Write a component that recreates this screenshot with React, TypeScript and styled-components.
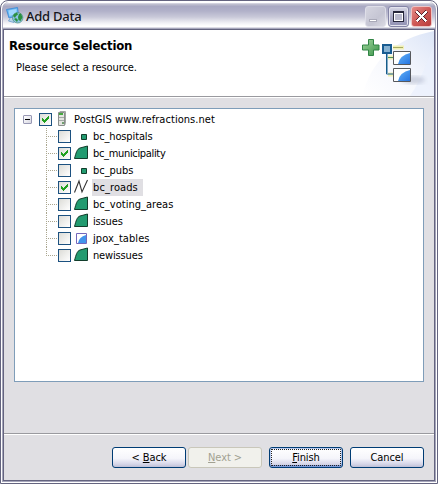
import React from "react";
import styled, { createGlobalStyle, css } from "styled-components";

const Global = createGlobalStyle`
  *, *::before, *::after { box-sizing: border-box; }
  body { margin: 0; background: #fff; }
`;

const Frame = styled.div`
  width: 438px;
  height: 484px;
  border: 1px solid #64647f;
  border-radius: 8px 8px 0 0;
  background: #fff;
  padding: 1px;
  overflow: hidden;
  font: 11px/17px "DejaVu Sans Condensed", "DejaVu Sans", sans-serif;
  font-stretch: condensed;
  color: #000;
`;

const Shell = styled.div`
  height: 480px;
  border: 1px solid #a6a6bb;
  border-top: 0;
  border-radius: 7px 7px 0 0;
  overflow: hidden;
  display: flex;
  flex-direction: column;
  background: linear-gradient(#fff 0 1px, #d3d3df 1px 2px, #bdbdce 2px 3px, #a8a8c2 4px, #b1b1c9 9px, #c9c9d9 15px, #f1f1f5 21px, #fff 24px, #fff 25px, #dddde6 25px 26px, #a6a6bb 26px);
`;

const TitleBar = styled.header`
  height: 27px;
  flex: none;
  display: flex;
  align-items: flex-start;
  padding: 4px 3px 0 3px;
`;

const Title = styled.h1`
  margin: 1px auto 0 2px;
  font: 500 13px/18px "Noto Sans", sans-serif;
  letter-spacing: -0.25px;
  color: #16161c;
`;

const Controls = styled.div`
  display: flex;
  gap: 2px;
`;

const ControlButton = styled.button<{ $kind: "min" | "max" | "close" }>`
  width: 21px;
  height: 21px;
  padding: 0;
  display: flex;
  border-radius: 3px;
  border: 1px solid #f5f5fa;
  ${({ $kind }) =>
    $kind === "close"
      ? css`background: linear-gradient(135deg, #e58c88, #cf5a57 50%, #b93c3c); border-color: #eec4c4;`
      : $kind === "max"
      ? css`background: linear-gradient(#d9d9e6, #a9a9c4 50%, #9292b4); border-color: #8484a6; box-shadow: inset 0 0 0 1px #e3e3ee;`
      : css`background: linear-gradient(135deg, #d5d5e0, #c5c5d3 60%, #d9d9e2); border-color: #dedee8;`}
`;

const Body = styled.div`
  flex: 1;
  display: flex;
  flex-direction: column;
  border: 1px solid #64647f;
  background: #e0dfe3;
`;

const Banner = styled.section`
  height: 67px;
  flex: none;
  display: flex;
  justify-content: space-between;
  background: #fff;
  border-bottom: 1px solid #9a9a9f;
`;

const BannerText = styled.div`
  padding: 7px 0 0 5px;
`;

const Heading = styled.h2`
  margin: 0;
  font: bold 13px/17px "DejaVu Sans Condensed", "DejaVu Sans", sans-serif;
  font-stretch: condensed;
  letter-spacing: -0.16px;
`;

const Message = styled.p`
  margin: 5px 0 0 7px;
  letter-spacing: -0.08px;
`;

const Content = styled.main`
  height: 337px;
  flex: none;
  padding: 10px 10px 0;
  border-top: 1px solid #fff;
  border-bottom: 1px solid #9a9a9f;
`;

const Tree = styled.div`
  width: 410px;
  height: 274px;
  padding: 2px 0 0 8px;
  background: #fff;
  border: 1px solid #7f9db9;
`;

const RootRow = styled.div`
  height: 17px;
  display: flex;
  align-items: center;
`;

const Expander = styled.span`
  width: 9px;
  height: 9px;
  margin-right: 7px;
  border: 1px solid #9898b4;
  border-radius: 1px;
  background: linear-gradient(135deg, #fff, #d8d8e2);
  display: grid;
  place-items: center;
  &::after { content: ""; width: 5px; height: 1px; background: #000; }
`;

const Check = styled.span`
  width: 13px;
  height: 13px;
  flex: none;
  border: 1px solid #1c5180;
  background: linear-gradient(135deg, #dcdcd7, #fff);
  display: grid;
  place-items: center;
`;

const Children = styled.ul`
  list-style: none;
  margin: 0;
  padding: 0 0 0 23px;
`;

const Branch = styled.li`
  height: 17px;
  display: flex;
  align-items: center;
`;

const Guide = styled.svg`
  width: 12px;
  height: 17px;
  flex: none;
`;

const IconSlot = styled.span<{ $root?: boolean }>`
  width: 16px;
  height: 16px;
  margin: ${({ $root }) => ($root ? "-1px 0 0 5px" : "0 3px 0 2px")};
  flex: none;
  align-self: flex-start;
  svg { display: block; }
`;

const Label = styled.span<{ $selected?: boolean; $track?: number }>`
  height: 17px;
  line-height: 17px;
  padding: 0 2px 0 1px;
  white-space: nowrap;
  letter-spacing: ${({ $track = -0.1 }) => $track}px;
  background: ${({ $selected }) => ($selected ? "#e0dfe3" : "transparent")};
  ${({ $selected }) => $selected && "width: 51px;"}
`;

const Footer = styled.footer`
  flex: 1;
  display: flex;
  padding: 12px 10px 0;
  justify-content: flex-end;
  border-top: 1px solid #fff;
`;

const DialogButton = styled.button<{ $focus?: boolean }>`
  width: 74px;
  height: 21px;
  padding: 0;
  margin-left: 7px;
  border: 1px solid #003c74;
  border-radius: 3px;
  background: linear-gradient(#fff, #f5f5fb 55%, #d5d5e8 85%, #bebfd5);
  font: inherit;
  line-height: 19px;
  letter-spacing: -0.1px;
  color: #000;
  &:disabled {
    margin-left: 2px;
    color: #a1a192;
    border-color: #c9c7ba;
    background: #f1f1ec;
  }
  ${({ $focus }) =>
    $focus &&
    css`
      box-shadow: inset 0 -2px 0 #7c9ad8, inset 0 0 0 1px #b7c9ed;
      outline: 1px dotted #222;
      outline-offset: -3px;
    `}
`;

const Tick = () => (
  <svg width="9" height="9" viewBox="0 0 9 9" shapeRendering="crispEdges">
    <path d="M1 3h1v1h1v1h1v-1h1v-1h1v-1h1v-1h1v3h-1v1h-1v1h-1v1h-1v1h-1v-1h-1v-1h-1z" fill="#21a121" />
  </svg>
);

const DialogIcon = () => (
  <svg width="18" height="18" viewBox="0 0 18 18">
    <path d="M.5 3.500 11.500 1.500l1 8L3 12z" fill="#6bb9f2" stroke="#3c8ad6" strokeWidth=".9" />
    <path d="M2.500 4.500 10.500 3v5l-7 2z" fill="#a0d8ff" />
    <path d="M4 12.500 2.500 15 8 16.500v-4" fill="#b7d4ec" stroke="#6d9dcb" strokeWidth=".8" />
    <circle cx="11.700" cy="11.800" r="5.200" fill="#8cc4e4" stroke="#4d8d78" strokeWidth=".7" />
    <path d="m8 8 3-1.500 1 2-2 1.500-1 2-2-2zm5 0 2-.5 1.500 4-2 3.500-2-1-.5-3zm-5 5 2-1 2 2-1 2z" fill="#2b9140" />
  </svg>
);

const ControlGlyph = ({ kind }: { kind: "min" | "max" | "close" }) => (
  <svg width="19" height="19" viewBox="0 0 19 19" shapeRendering="crispEdges">
    {kind === "min" && <path d="M3.500 12.500h7v2h-7z" fill="#fff" stroke="#a9a9b8" />}
    {kind === "max" && (
      <>
        <path d="M4 4h11v11H4z" fill="#fff" />
        <path d="M4.500 4.500h10v10h-10z" fill="#b9b9cd" stroke="#26263b" />
        <path d="M4 5.500h11" stroke="#26263b" />
        <path d="M5.500 6.500h8v7h-8z" fill="none" stroke="#fff" />
      </>
    )}
    {kind === "close" && (
      <>
        <path d="m4.500 4.500 10 10m0-10-10 10" stroke="#592530" strokeWidth="4" />
        <path d="m4.500 4.500 10 10m0-10-10 10" stroke="#fff" strokeWidth="2.300" />
      </>
    )}
  </svg>
);

const BannerArt = () => (
  <svg width="86" height="66" viewBox="0 0 86 66">
    <defs>
      <linearGradient id="sky" x1="0" y1="1" x2="1" y2="0">
        <stop offset="0" stopColor="#fff" />
        <stop offset=".5" stopColor="#f5f7fd" />
        <stop offset="1" stopColor="#dce5f7" />
      </linearGradient>
      <linearGradient id="tile" x1="0" y1="0" x2="1" y2="1">
        <stop offset="0" stopColor="#63b4fa" />
        <stop offset="1" stopColor="#2674e0" />
      </linearGradient>
      <linearGradient id="plus" x1="0" y1="0" x2="1" y2="1">
        <stop offset="0" stopColor="#a1d49c" />
        <stop offset="1" stopColor="#3a9449" />
      </linearGradient>
      <filter id="soft"><feGaussianBlur stdDeviation="2" /></filter>
    </defs>
    <path d="M14 66C24 29 47 9 86 1V66z" fill="url(#sky)" />
    <path d="M62 66C74 49 80 28 86 16V66z" fill="#eaf0fc" opacity=".7" />
    <ellipse cx="65" cy="50" rx="12" ry="4" fill="#a5adc2" opacity=".5" filter="url(#soft)" />
    <path d="M20.500 9.500h5v5.500h5.500v5h-5.500v5.500h-5v-5.500h-6v-5h6z" fill="url(#plus)" stroke="#308444" />
    <path d="M45 17.500h11M40 27.500h6M40 44.500h6" stroke="#f1f0b4" strokeWidth="4" />
    <path d="M38.500 22v22h7" fill="none" stroke="#155b8b" />
    <path d="M39 27.500h6" stroke="#4d8d61" />
    <path d="M39.500 22v21" stroke="#83aac4" />
    <path d="M45 17.500h10" stroke="#a6a963" />
    <path d="M35 15h8v8h-8z" fill="#86b1d1" stroke="#195c91" strokeWidth="2" />
    {[21.5, 38.5].map((y) => (
      <g key={y}>
        <path d={`M45.500 ${y}h17v13h-17z`} fill="#fff" stroke="#56585d" />
        <path d={`M50 ${y + 12.5}q2-9 12-11v11z`} fill="url(#tile)" />
      </g>
    ))}
  </svg>
);

const ServerIcon = () => (
  <svg width="12" height="17" viewBox="0 0 12 17">
    <path d="M1.500 2.500h6v13h-6z" fill="#e3e4e0" stroke="#8b8f8c" />
    <path d="M2 2.500 3 1.500h5.500v12l-1 2" fill="none" stroke="#a2a7a4" />
    <path d="M2 3h4v2H2z" fill="#45a83f" />
    <path d="M2 7.500h5M2 10.500h5" stroke="#a5aaa6" />
    <path d="M5 12h2v2H5z" fill="#719f70" />
  </svg>
);

type Kind = "point" | "polygon" | "line" | "table";

const LayerIcon = ({ kind }: { kind: Kind }) => (
  <svg width="16" height="16" viewBox="0 0 16 16">
    {kind === "point" && <path d="M8.500 6.500h5v5h-5z" fill="#229b70" stroke="#123d2b" />}
    {kind === "polygon" && <path d="M1.500 13.500C3 8 4 4 7 3l7.500-2v12.500z" fill="#229b70" stroke="#123d2b" />}
    {kind === "line" && <path d="M1.500 13.500 6 2l3 11L14.500 1" fill="none" stroke="#333" strokeWidth="1.100" />}
    {kind === "table" && (
      <>
        <path d="M3.500 3.500h10v10h-10z" fill="#fff" stroke="#7467bb" />
        <path d="M5 13q1-6 8-8v8z" fill="#4294ec" />
      </>
    )}
  </svg>
);

const layers: { name: string; kind: Kind; track: number; checked?: boolean; selected?: boolean }[] = [
  { name: "bc_hospitals", kind: "point", track: -0.13 },
  { name: "bc_municipality", kind: "polygon", track: -0.33, checked: true },
  { name: "bc_pubs", kind: "point", track: -0.05 },
  { name: "bc_roads", kind: "line", track: 0.1, checked: true, selected: true },
  { name: "bc_voting_areas", kind: "polygon", track: 0.03 },
  { name: "issues", kind: "polygon", track: -0.15 },
  { name: "jpox_tables", kind: "table", track: 0.07 },
  { name: "newissues", kind: "polygon", track: -0.15 },
];

export default function App() {
  return (
    <>
      <Global />
      <Frame>
        <Shell>
          <TitleBar>
            <DialogIcon />
            <Title>Add Data</Title>
            <Controls>
              {(["min", "max", "close"] as const).map((kind) => (
                <ControlButton key={kind} $kind={kind} aria-label={kind}>
                  <ControlGlyph kind={kind} />
                </ControlButton>
              ))}
            </Controls>
          </TitleBar>
          <Body>
            <Banner>
              <BannerText>
                <Heading>Resource Selection</Heading>
                <Message>Please select a resource.</Message>
              </BannerText>
              <BannerArt />
            </Banner>
            <Content>
              <Tree>
                <RootRow>
                  <Expander />
                  <Check><Tick /></Check>
                  <IconSlot $root><ServerIcon /></IconSlot>
                  <Label $track={0.05}>PostGIS www.refractions.net</Label>
                </RootRow>
                <Children>
                  {layers.map((layer, i) => (
                    <Branch key={layer.name}>
                      <Guide>
                        <path
                          d={`M.5 0V${i === layers.length - 1 ? 9 : 17}M2 8.500h10`}
                          stroke="#aaa68f"
                          strokeDasharray="1 1"
                          shapeRendering="crispEdges"
                        />
                      </Guide>
                      <Check>{layer.checked && <Tick />}</Check>
                      <IconSlot><LayerIcon kind={layer.kind} /></IconSlot>
                      <Label $selected={layer.selected} $track={layer.track}>{layer.name}</Label>
                    </Branch>
                  ))}
                </Children>
              </Tree>
            </Content>
            <Footer>
              <DialogButton>&lt; <u>B</u>ack</DialogButton>
              <DialogButton disabled><u>N</u>ext &gt;</DialogButton>
              <DialogButton $focus><u>F</u>inish</DialogButton>
              <DialogButton>Cancel</DialogButton>
            </Footer>
          </Body>
        </Shell>
      </Frame>
    </>
  );
}
